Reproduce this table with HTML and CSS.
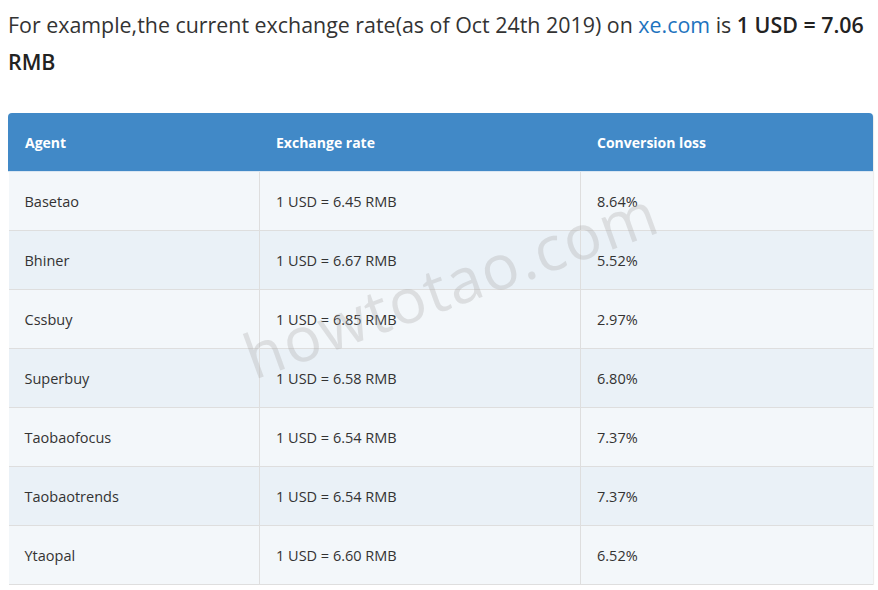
FILE: index.html
```html
<!DOCTYPE html>
<html>
<head>
<meta charset="utf-8">
<link rel="stylesheet" href="styles.css">
</head>
<body>
<div class="page">
  <p class="intro">For example,the current exchange rate(as of Oct 24th 2019) on <a href="#" class="link">xe.com</a> is <strong>1 USD = 7.06 RMB</strong></p>
  <div class="table-wrap">
    <table class="rates">
      <thead>
        <tr><th class="c1">Agent</th><th class="c2">Exchange rate</th><th class="c3">Conversion loss</th></tr>
      </thead>
      <tbody>
        <tr><td>Basetao</td><td>1 USD = 6.45 RMB</td><td>8.64%</td></tr>
        <tr><td>Bhiner</td><td>1 USD = 6.67 RMB</td><td>5.52%</td></tr>
        <tr><td>Cssbuy</td><td>1 USD = 6.85 RMB</td><td>2.97%</td></tr>
        <tr><td>Superbuy</td><td>1 USD = 6.58 RMB</td><td>6.80%</td></tr>
        <tr><td>Taobaofocus</td><td>1 USD = 6.54 RMB</td><td>7.37%</td></tr>
        <tr><td>Taobaotrends</td><td>1 USD = 6.54 RMB</td><td>7.37%</td></tr>
        <tr><td>Ytaopal</td><td>1 USD = 6.60 RMB</td><td>6.52%</td></tr>
      </tbody>
    </table>
    <div class="watermark">howtotao.com</div>
  </div>
</div>
</body>
</html>
```

FILE: styles.css
```css
html, body {
  margin: 0;
  padding: 0;
  background: #ffffff;
}
body {
  font-family: "Open Sans", "Noto Sans", sans-serif;
  color: #333333;
}
.page {
  padding: 0 5px 0 8px;
}
.intro {
  margin: 0;
  padding-top: 6px;
  font-size: 21.4px;
  line-height: 37px;
  color: #333;
}
.intro strong {
  font-weight: 600;
  color: #222;
}
.link {
  color: #1e73be;
  text-decoration: none;
}
.table-wrap {
  position: relative;
  margin-top: 33px;
  width: 865px;
  overflow: hidden;
  border-radius: 4px 4px 0 0;
  box-shadow: 1px 1px 1px rgba(0,0,0,0.08);
}
.rates {
  width: 100%;
  border-collapse: collapse;
  font-size: 14.5px;
  table-layout: fixed;
}
.rates th, .rates td {
  text-align: left;
  padding: 0 16px;
  border: 1px solid #dedede;
}
.rates th {
  height: 57px;
  background: #4189c7;
  color: #ffffff;
  font-size: 14px;
  font-weight: 700;
  border-color: #4189c7;
  border-left: 1px solid #d9e6f2;
  border-bottom: 1px solid #d9e6f2;
}
.rates th:first-child { border-left-color: #4189c7; }
.rates td {
  height: 58px;
  color: #333;
}
.rates tr:first-child td { border-top: none; }
.rates td:first-child { border-left: none; }
.rates td:last-child { border-right: none; }
.rates th:last-child { border-right: none; }
.rates tbody tr:nth-child(odd) td { background: #f3f7fa; }
.rates tbody tr:nth-child(even) td { background: #eaf1f7; }
.c1 { width: 218px; }
.c2 { width: 288px; }
.watermark {
  position: absolute;
  left: 246px;
  top: 212px;
  font-family: "Open Sans", sans-serif;
  font-weight: 400;
  font-size: 62px;
  line-height: 1;
  letter-spacing: 1.5px;
  color: rgba(170,170,170,0.32);
  transform: rotate(-20deg);
  transform-origin: 0 55px;
  pointer-events: none;
  white-space: nowrap;
}
```
